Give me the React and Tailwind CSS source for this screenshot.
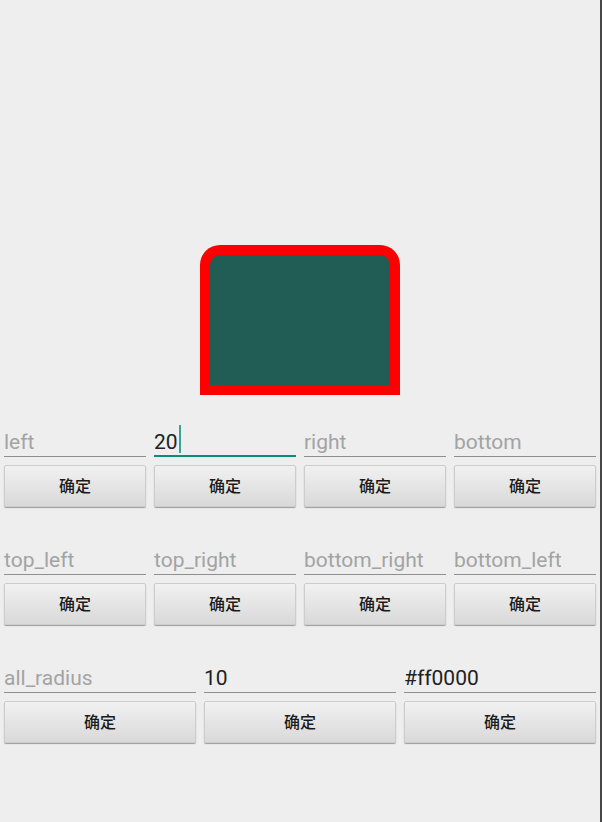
import React from "react";

const latin = { fontFamily: "Roboto, 'Noto Sans CJK SC', sans-serif" };

const Field = ({ hint, value, focused }) => (
  <div
    className={
      focused
        ? "h-[27px] border-b-2 border-[#0f8a7c] pb-[2px] flex items-end"
        : "h-[27px] border-b border-[#8f8f8f] pb-[3px] flex items-end"
    }
  >
    {value ? (
      <span className="relative text-[21px] leading-[22px] text-[#212121]">
        {value}
        {focused && (
          <span className="absolute -right-[3px] -top-[6px] w-[2px] h-[28px] bg-[#3fa394]"></span>
        )}
      </span>
    ) : (
      <span className="text-[21px] leading-[22px] text-[#a3a3a3]">{hint}</span>
    )}
  </div>
);

const OkButton = () => (
  <button className="mt-[8px] h-[42px] w-full pt-[2px] rounded-[2px] border border-[#cdcdcd] bg-gradient-to-b from-[#f1f1f1] to-[#d9d9d9] shadow-[0_1px_1px_rgba(0,0,0,0.35)] text-[16px] font-medium text-[#1a1a1a]">
    确定
  </button>
);

const Cell = (props) => (
  <div className="flex flex-col">
    <Field {...props} />
    <OkButton />
  </div>
);

export default function App() {
  return (
    <div className="min-h-[822px] bg-[#eeeeee] flex" style={latin}>
      <div className="w-[600px]">
        <div className="pt-[245px] flex justify-center">
          <div className="w-[200px] h-[150px] p-[10px] bg-[#ff0000] rounded-t-[20px]">
            <div className="h-full bg-[#215c55] rounded-t-[10px]"></div>
          </div>
        </div>

        <div className="px-[4px] mt-[35px] flex flex-col gap-[41px]">
          <div className="grid grid-cols-4 gap-x-[8px]">
            <Cell hint="left" />
            <Cell value="20" focused />
            <Cell hint="right" />
            <Cell hint="bottom" />
          </div>

          <div className="grid grid-cols-4 gap-x-[8px]">
            <Cell hint="top_left" />
            <Cell hint="top_right" />
            <Cell hint="bottom_right" />
            <Cell hint="bottom_left" />
          </div>

          <div className="grid grid-cols-3 gap-x-[8px]">
            <Cell hint="all_radius" />
            <Cell value="10" />
            <Cell value="#ff0000" />
          </div>
        </div>
      </div>
      <div className="w-[2px] bg-[#474747]"></div>
    </div>
  );
}
